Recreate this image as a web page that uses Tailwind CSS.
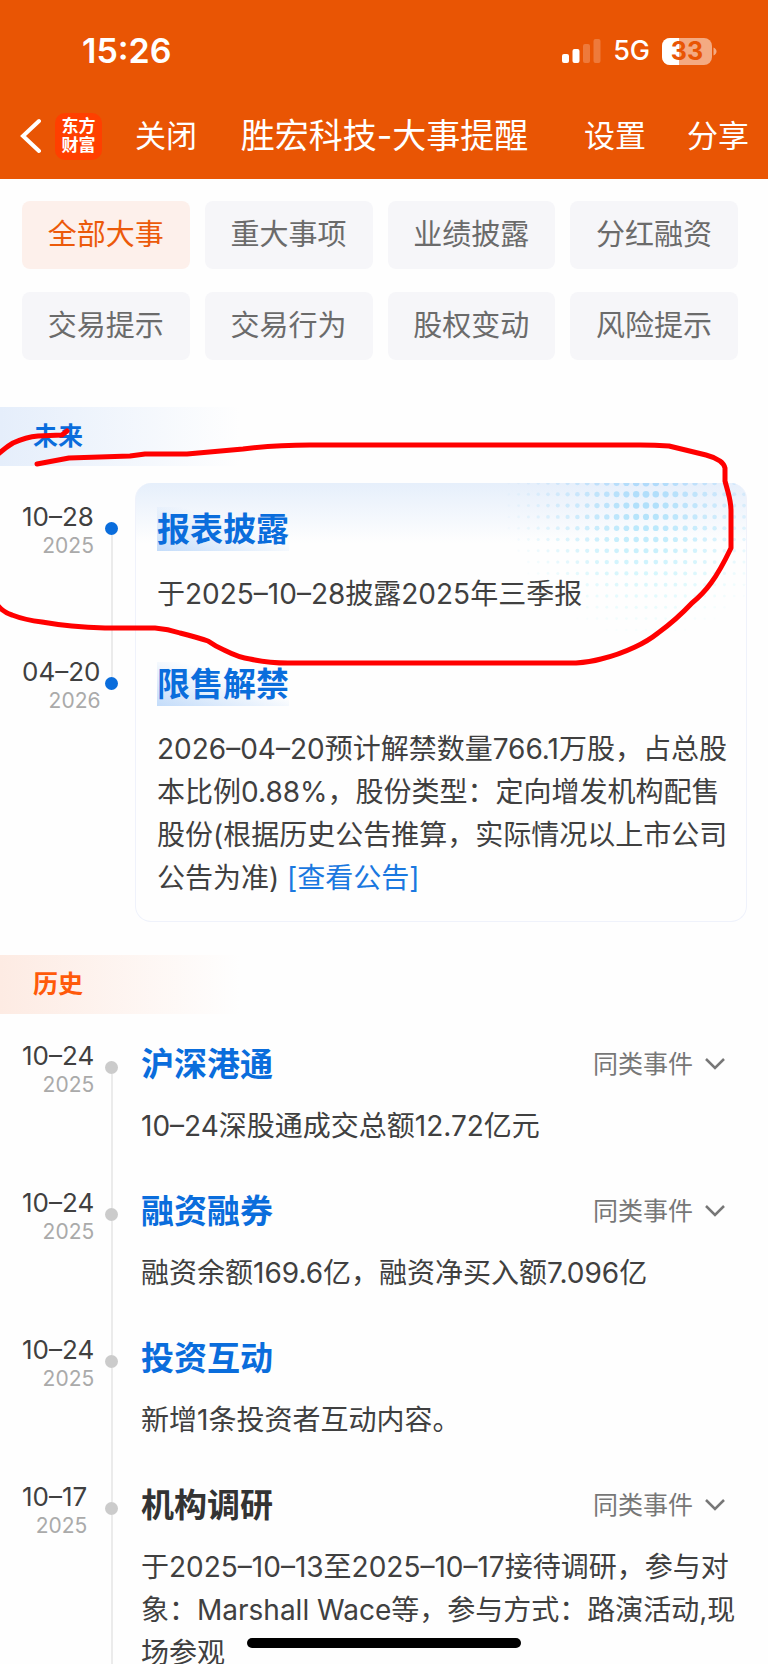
<!DOCTYPE html>
<html lang="zh-CN">
<head>
  <meta charset="UTF-8">
  <meta name="viewport" content="width=device-width, initial-scale=1.0">
  <title>胜宏科技-大事提醒</title>
  <script src="https://cdn.jsdelivr.net/npm/@tailwindcss/browser@4"></script>
  <style>
    body {
      font-family: 'Inter', 'Noto Sans CJK SC', sans-serif;
    }
  </style>
</head>
<body class="bg-[#fefefe] text-[#404040]">
<div class="relative h-screen overflow-hidden">
  <header class="bg-[#e95504] text-white pb-[9px]">
    <!-- Status bar -->
    <div class="flex items-center justify-between h-[102px] pl-[82px] pr-[51px]">
      <span class="text-[34px] leading-[40px] font-semibold">15:26</span>
      <div class="flex items-center">
        <svg class="w-[39px] h-[26px]" viewBox="0 0 39 26" fill="currentColor">
          <rect x="0" y="16" width="7" height="9" rx="2"></rect>
          <rect x="10.5" y="11" width="7" height="14" rx="2"></rect>
          <rect x="21" y="6" width="7" height="19" rx="2" opacity=".22"></rect>
          <rect x="31.500" y="1" width="7" height="24" rx="2" opacity=".22"></rect>
        </svg>
        <span class="ml-[12px] text-[27px] leading-[32px] font-medium">5G</span>
        <div class="relative ml-[12px] w-[55px] h-[27px]">
          <svg class="w-full h-full" viewBox="0 0 55 27" fill="currentColor">
            <defs>
              <clipPath id="battery"><rect width="50" height="27" rx="8"></rect></clipPath>
            </defs>
            <g clip-path="url(#battery)">
              <rect width="50" height="27" opacity=".5"></rect>
              <rect width="17" height="27"></rect>
            </g>
            <path d="M51.500 9.500c4 1.500 4 6.500 0 8z" opacity=".5"></path>
          </svg>
          <span class="absolute left-0 top-0 w-[50px] text-center text-[25px] leading-[27px] font-bold text-[#e95504]">33</span>
        </div>
      </div>
    </div>
    <!-- Navigation bar -->
    <nav class="grid grid-cols-[1fr_auto_1fr] items-center h-[68px] pl-[20px] pr-[19px] text-[31px] leading-[40px]">
      <div class="flex items-center">
        <button type="button" aria-label="返回">
          <svg class="w-[21px] h-[36px]" viewBox="0 0 21 36" fill="none" stroke="currentColor" stroke-width="4" stroke-linecap="round">
            <path d="M19 3L3 18l16 15"></path>
          </svg>
        </button>
        <span class="ml-[14px] w-[47px] h-[47px] rounded-[10px] bg-[#ff3f00] flex items-center justify-center text-[17px] leading-[19px] font-bold text-center">东方<br>财富</span>
        <button type="button" class="ml-[33px]">关闭</button>
      </div>
      <h1 class="text-[34px] leading-[44px]">胜宏科技-大事提醒</h1>
      <div class="flex items-center justify-end gap-[41px]">
        <button type="button">设置</button>
        <button type="button">分享</button>
      </div>
    </nav>
  </header>

  <main>
    <!-- Category filter -->
    <div class="grid grid-cols-4 gap-x-[15px] gap-y-[23px] pt-[22px] pl-[22px] pr-[30px] text-[29px] leading-[40px] text-[#6b6b6b]">
      <button type="button" class="h-[68px] rounded-lg bg-[#fdf0eb] text-[#ec5a0a]">全部大事</button>
      <button type="button" class="h-[68px] rounded-lg bg-[#f6f6f9]">重大事项</button>
      <button type="button" class="h-[68px] rounded-lg bg-[#f6f6f9]">业绩披露</button>
      <button type="button" class="h-[68px] rounded-lg bg-[#f6f6f9]">分红融资</button>
      <button type="button" class="h-[68px] rounded-lg bg-[#f6f6f9]">交易提示</button>
      <button type="button" class="h-[68px] rounded-lg bg-[#f6f6f9]">交易行为</button>
      <button type="button" class="h-[68px] rounded-lg bg-[#f6f6f9]">股权变动</button>
      <button type="button" class="h-[68px] rounded-lg bg-[#f6f6f9]">风险提示</button>
    </div>

    <!-- Upcoming events -->
    <section class="mt-[47px]">
      <h2 class="w-[240px] h-[59px] pl-[33px] bg-linear-to-r from-[#e5eefb] to-[#fefefe] text-[25px] leading-[59px] font-bold text-[#0a6ddc]">未来</h2>
      <div class="grid grid-cols-[135px_1fr] mt-[17px] pr-[21px]">
        <div class="relative col-start-2 row-start-1 row-span-2 overflow-hidden rounded-2xl border border-t-0 border-[#eff2fb] bg-linear-to-b from-[#e6effb] to-[#fefefe] to-[60px]">
          <svg id="halftone" class="absolute right-0 top-0 w-[250px] h-[150px]" viewBox="0 0 250 150"></svg>
        </div>
        <div class="row-start-1 col-start-1 flex pt-[24px] pl-[22px]">
          <div class="w-[83px]">
            <div class="inline-block text-right">
              <p class="text-[26px] leading-[20px]">10–28</p>
              <p class="mt-[9px] text-[21px] leading-[20px] text-[#aaa]">2025</p>
            </div>
          </div>
          <div class="flex flex-col items-center w-[13px]">
            <span class="h-[15px]"></span>
            <span class="w-[13px] h-[13px] rounded-full bg-[#0a6ddc]"></span>
            <span class="w-[2px] flex-1 bg-[#ebebeb]"></span>
          </div>
        </div>
        <article class="relative row-start-1 col-start-2 pt-[24px] pl-[22px] pr-[8px]">
          <h3 class="w-fit bg-linear-to-tr from-[#c3dcfa] to-transparent to-60% text-[33px] leading-[44px] font-bold text-[#0a6ddc]">报表披露</h3>
          <p class="mt-[22px] text-[28px] leading-[43px]">于2025–10–28披露2025年三季报</p>
        </article>
        <div class="row-start-2 col-start-1 flex pl-[22px]">
          <div class="w-[83px] pt-[46px]">
            <div class="inline-block text-right">
              <p class="text-[26px] leading-[20px]">04–20</p>
              <p class="mt-[9px] text-[21px] leading-[20px] text-[#aaa]">2026</p>
            </div>
          </div>
          <div class="flex flex-col items-center w-[13px]">
            <span class="w-[2px] h-[61px] bg-[#ebebeb]"></span>
            <span class="w-[13px] h-[13px] rounded-full bg-[#0a6ddc]"></span>
          </div>
        </div>
        <article class="relative row-start-2 col-start-2 pt-[46px] pb-[22px] pl-[22px] pr-[8px]">
          <h3 class="w-fit bg-linear-to-tr from-[#c3dcfa] to-transparent to-60% text-[33px] leading-[44px] font-bold text-[#0a6ddc]">限售解禁</h3>
          <p class="mt-[22px] text-[28px] leading-[43px]">2026–04–20预计解禁数量766.1万股，占总股本比例0.88%，股份类型：定向增发机构配售股份(根据历史公告推算，实际情况以上市公司公告为准) <a href="#" class="text-[#1a78e0]">[查看公告]</a></p>
        </article>
      </div>
    </section>

    <!-- Past events -->
    <section class="mt-[33px]">
      <h2 class="w-[240px] h-[59px] pl-[33px] bg-linear-to-r from-[#fdebe3] to-[#fefefe] text-[25px] leading-[59px] font-bold text-[#ff5a0a]">历史</h2>
      <ol class="mt-[32px] pl-[22px] pr-[28px]">
        <li class="flex">
          <div class="w-[83px]">
            <div class="inline-block text-right">
              <p class="text-[26px] leading-[20px]">10–24</p>
              <p class="mt-[9px] text-[21px] leading-[20px] text-[#aaa]">2025</p>
            </div>
          </div>
          <div class="flex flex-col items-center w-[13px]">
            <span class="h-[15px]"></span>
            <span class="w-[13px] h-[13px] rounded-full bg-[#cbcbcb]"></span>
            <span class="w-[2px] flex-1 bg-[#ebebeb]"></span>
          </div>
          <article class="flex-1 pl-[23px] pb-[45px]">
            <div class="flex items-center justify-between pr-[15px]">
              <h3 class="text-[33px] leading-[36px] font-bold text-[#0a6ddc]">沪深港通</h3>
              <button type="button" class="flex items-center gap-[12px] text-[25px] leading-[36px] text-[#777]">同类事件
                <svg class="w-[20px] h-[12px]" viewBox="0 0 20 12" fill="none" stroke="currentColor" stroke-width="2.5"><path d="M1 1l9 9 9-9"></path></svg>
              </button>
            </div>
            <p class="mt-[23px] text-[28px] leading-[43px]">10–24深股通成交总额12.72亿元</p>
          </article>
        </li>
        <li class="flex">
          <div class="w-[83px]">
            <div class="inline-block text-right">
              <p class="text-[26px] leading-[20px]">10–24</p>
              <p class="mt-[9px] text-[21px] leading-[20px] text-[#aaa]">2025</p>
            </div>
          </div>
          <div class="flex flex-col items-center w-[13px]">
            <span class="w-[2px] h-[15px] bg-[#ebebeb]"></span>
            <span class="w-[13px] h-[13px] rounded-full bg-[#cbcbcb]"></span>
            <span class="w-[2px] flex-1 bg-[#ebebeb]"></span>
          </div>
          <article class="flex-1 pl-[23px] pb-[45px]">
            <div class="flex items-center justify-between pr-[15px]">
              <h3 class="text-[33px] leading-[36px] font-bold text-[#0a6ddc]">融资融券</h3>
              <button type="button" class="flex items-center gap-[12px] text-[25px] leading-[36px] text-[#777]">同类事件
                <svg class="w-[20px] h-[12px]" viewBox="0 0 20 12" fill="none" stroke="currentColor" stroke-width="2.5"><path d="M1 1l9 9 9-9"></path></svg>
              </button>
            </div>
            <p class="mt-[23px] text-[28px] leading-[43px]">融资余额169.6亿，融资净买入额7.096亿</p>
          </article>
        </li>
        <li class="flex">
          <div class="w-[83px]">
            <div class="inline-block text-right">
              <p class="text-[26px] leading-[20px]">10–24</p>
              <p class="mt-[9px] text-[21px] leading-[20px] text-[#aaa]">2025</p>
            </div>
          </div>
          <div class="flex flex-col items-center w-[13px]">
            <span class="w-[2px] h-[15px] bg-[#ebebeb]"></span>
            <span class="w-[13px] h-[13px] rounded-full bg-[#cbcbcb]"></span>
            <span class="w-[2px] flex-1 bg-[#ebebeb]"></span>
          </div>
          <article class="flex-1 pl-[23px] pb-[45px]">
            <h3 class="text-[33px] leading-[36px] font-bold text-[#0a6ddc]">投资互动</h3>
            <p class="mt-[23px] text-[28px] leading-[43px]">新增1条投资者互动内容。</p>
          </article>
        </li>
        <li class="flex">
          <div class="w-[83px]">
            <div class="inline-block text-right">
              <p class="text-[26px] leading-[20px]">10–17</p>
              <p class="mt-[9px] text-[21px] leading-[20px] text-[#aaa]">2025</p>
            </div>
          </div>
          <div class="flex flex-col items-center w-[13px]">
            <span class="w-[2px] h-[15px] bg-[#ebebeb]"></span>
            <span class="w-[13px] h-[13px] rounded-full bg-[#cbcbcb]"></span>
            <span class="w-[2px] flex-1 bg-[#ebebeb]"></span>
          </div>
          <article class="flex-1 pl-[23px] pb-[45px]">
            <div class="flex items-center justify-between pr-[15px]">
              <h3 class="text-[33px] leading-[36px] font-bold text-[#333]">机构调研</h3>
              <button type="button" class="flex items-center gap-[12px] text-[25px] leading-[36px] text-[#777]">同类事件
                <svg class="w-[20px] h-[12px]" viewBox="0 0 20 12" fill="none" stroke="currentColor" stroke-width="2.5"><path d="M1 1l9 9 9-9"></path></svg>
              </button>
            </div>
            <p class="mt-[23px] text-[28px] leading-[43px]">于2025–10–13至2025–10–17接待调研，参与对象：Marshall Wace等，参与方式：路演活动,现场参观</p>
          </article>
        </li>
      </ol>
    </section>
  </main>

  <!-- Hand-drawn marker -->
  <svg class="absolute left-0 top-0 w-[768px] h-[700px] pointer-events-none" viewBox="0 0 768 700" fill="none" stroke="#ff0000" stroke-width="5" stroke-linecap="round" stroke-linejoin="round">
    <path d="M67 431L62 435L38 436Q26 437 13 443Q6 447 -4 456"></path>
    <path d="M-4 603Q2 612 12 615Q25 620 42 622Q70 627 105 628H155Q168 629 180 633Q196 637 208 641Q215 646 224 650Q240 658 250 659Q268 663 288 663H576Q590 662 601 659Q618 655 635 647Q648 641 658 633Q676 620 692 603Q703 594 711 583Q720 571 731 548V511Q731 503 728 492L725 481V468Q724 464 720 461Q714 457 706 455L669 446Q655 445 640 445H310Q275 445 243 449L187 454H145L130 456L69 458L37 464"></path>
  </svg>

  <!-- Home indicator -->
  <div class="absolute bottom-[16px] left-1/2 -translate-x-1/2 w-[274px] h-[10px] rounded-full bg-black"></div>
</div>

<script>
  const halftone = document.getElementById('halftone');
  for (let row = 0; row < 14; row++) {
    for (let col = 0; col < 26; col++) {
      const x = 3 + col * 9.8;
      const y = row * 11.3;
      const dx = Math.abs(x - 150) / 150;
      const dy = Math.max(0, y - 15) / 145;
      const level = 1 - Math.sqrt(dx * dx + dy * dy);
      if (level < 0.05) continue;
      const dot = document.createElementNS('http://www.w3.org/2000/svg', 'circle');
      dot.setAttribute('cx', x);
      dot.setAttribute('cy', y);
      dot.setAttribute('r', 1 + level * 2.4);
      dot.setAttribute('fill', `hsl(${206 - row * 2}, 90%, 84%)`);
      dot.setAttribute('opacity', Math.min(1, level * 1.1));
      halftone.appendChild(dot);
    }
  }
</script>
</body>
</html>
